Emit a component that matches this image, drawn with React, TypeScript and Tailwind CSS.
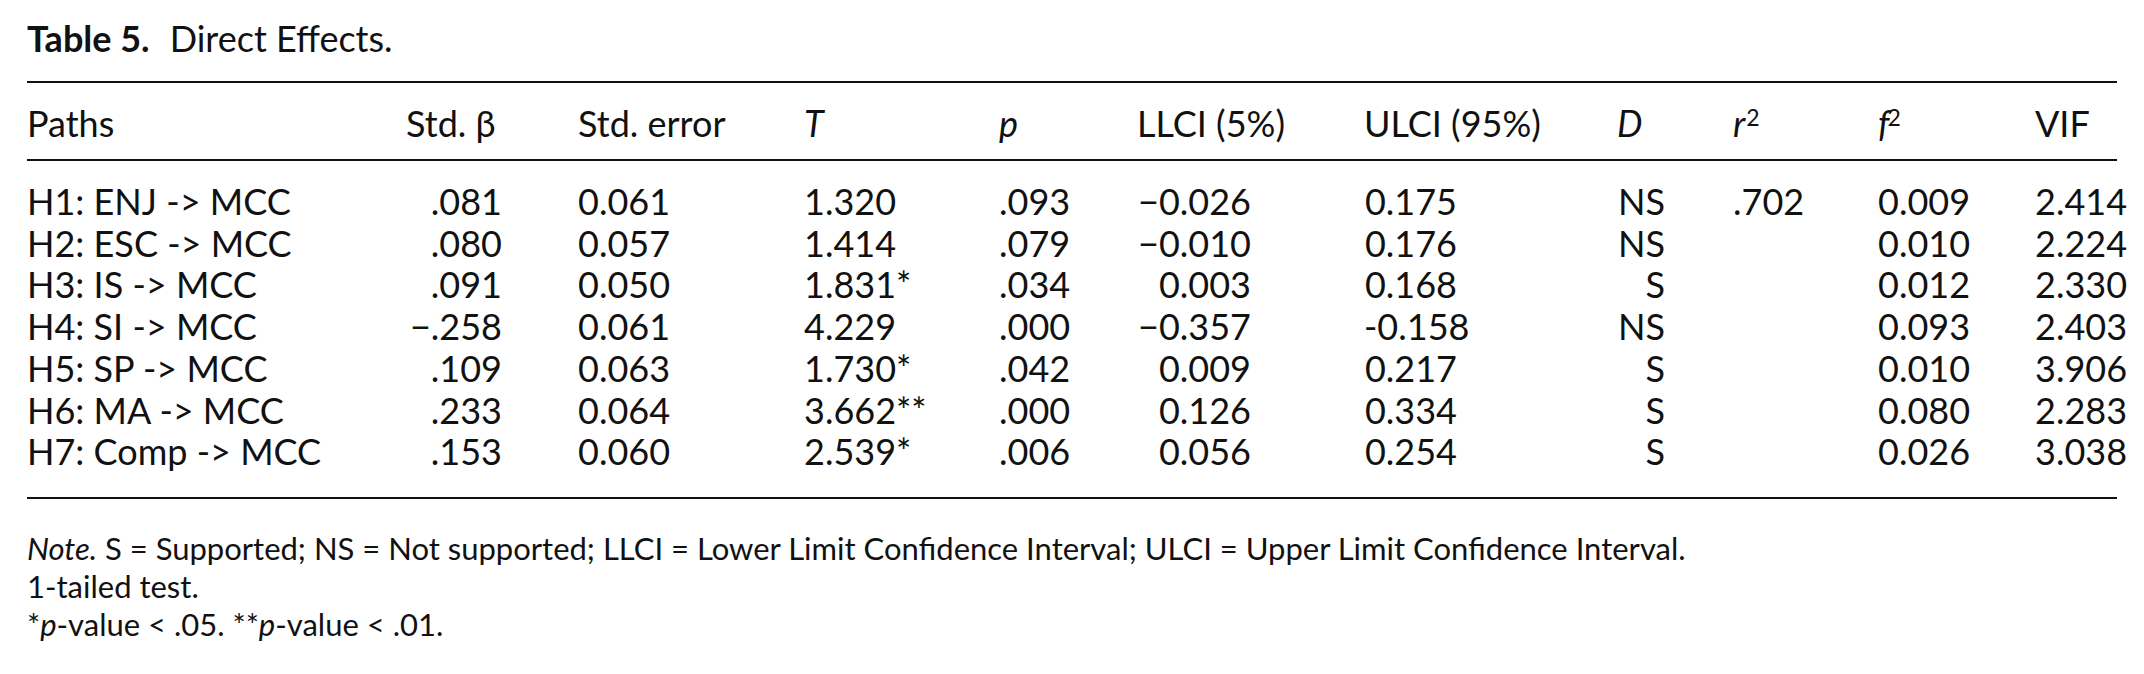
import React from "react";

type Row = {
  path: string;
  beta: string;
  se: string;
  t: string;
  p: string;
  llci: string;
  ulci: string;
  d: string;
  r2: string;
  f2: string;
  vif: string;
};

const rows: Row[] = [
  { path: "H1: ENJ -> MCC", beta: ".081", se: "0.061", t: "1.320", p: ".093", llci: "\u22120.026", ulci: "0.175", d: "NS", r2: ".702", f2: "0.009", vif: "2.414" },
  { path: "H2: ESC -> MCC", beta: ".080", se: "0.057", t: "1.414", p: ".079", llci: "\u22120.010", ulci: "0.176", d: "NS", r2: "", f2: "0.010", vif: "2.224" },
  { path: "H3: IS -> MCC", beta: ".091", se: "0.050", t: "1.831*", p: ".034", llci: "0.003", ulci: "0.168", d: "S", r2: "", f2: "0.012", vif: "2.330" },
  { path: "H4: SI -> MCC", beta: "\u2212.258", se: "0.061", t: "4.229", p: ".000", llci: "\u22120.357", ulci: "-0.158", d: "NS", r2: "", f2: "0.093", vif: "2.403" },
  { path: "H5: SP -> MCC", beta: ".109", se: "0.063", t: "1.730*", p: ".042", llci: "0.009", ulci: "0.217", d: "S", r2: "", f2: "0.010", vif: "3.906" },
  { path: "H6: MA -> MCC", beta: ".233", se: "0.064", t: "3.662**", p: ".000", llci: "0.126", ulci: "0.334", d: "S", r2: "", f2: "0.080", vif: "2.283" },
  { path: "H7: Comp -> MCC", beta: ".153", se: "0.060", t: "2.539*", p: ".006", llci: "0.056", ulci: "0.254", d: "S", r2: "", f2: "0.026", vif: "3.038" },
];

const grid =
  "grid grid-cols-[379px_172px_226px_195px_138px_227px_253px_116px_145px_157px_82px]";

export default function App() {
  return (
    <div
      className="w-[2144px] h-[674px] bg-white text-[#111111] px-[27px] pt-[18px] overflow-hidden"
      style={{ fontFamily: "Lato, 'Open Sans', sans-serif" }}
    >
      <div className="text-[36px] leading-[40px] whitespace-nowrap">
        <span className="font-bold">Table 5.</span>
        <span className="ml-[20px]">Direct Effects.</span>
      </div>

      <div className="mt-[23px] border-t-2 border-[#111111]" />

      <div className={`${grid} text-[36px] leading-[42px] pt-[19px] pb-[15px] whitespace-nowrap`}>
        <div>Paths</div>
        <div>Std. β</div>
        <div>Std. error</div>
        <div className="italic">T</div>
        <div className="italic">p</div>
        <div>LLCI (5%)</div>
        <div>ULCI (95%)</div>
        <div className="italic">D</div>
        <div>
          <span className="italic">r</span>
          <sup className="text-[23px] ml-[1px]">2</sup>
        </div>
        <div>
          <span className="italic">f</span>
          <sup className="text-[23px] -ml-[2px]">2</sup>
        </div>
        <div>VIF</div>
      </div>

      <div className="border-t-2 border-[#111111]" />

      <div className="pt-[20px] pb-[24px] text-[36px] leading-[41.7px] whitespace-nowrap">
        {rows.map((r) => (
          <div key={r.path} className={grid}>
            <div>{r.path}</div>
            <div className="text-right pr-[76px]">{r.beta}</div>
            <div>{r.se}</div>
            <div>{r.t}</div>
            <div>{r.p}</div>
            <div className="text-right pr-[113px]">{r.llci}</div>
            <div className="text-right pr-[160px]">{r.ulci}</div>
            <div className="text-right pr-[68px]">{r.d}</div>
            <div>{r.r2}</div>
            <div>{r.f2}</div>
            <div>{r.vif}</div>
          </div>
        ))}
      </div>

      <div className="border-t-2 border-[#111111]" />

      <div className="mt-[30px] text-[31px] leading-[38px] whitespace-nowrap">
        <div>
          <span className="italic">Note.</span> S = Supported; NS = Not supported; LLCI = Lower Limit Confidence Interval; ULCI = Upper Limit Confidence Interval.
        </div>
        <div>1-tailed test.</div>
        <div>
          *<span className="italic">p</span>-value &lt; .05. **<span className="italic">p</span>-value &lt; .01.
        </div>
      </div>
    </div>
  );
}
